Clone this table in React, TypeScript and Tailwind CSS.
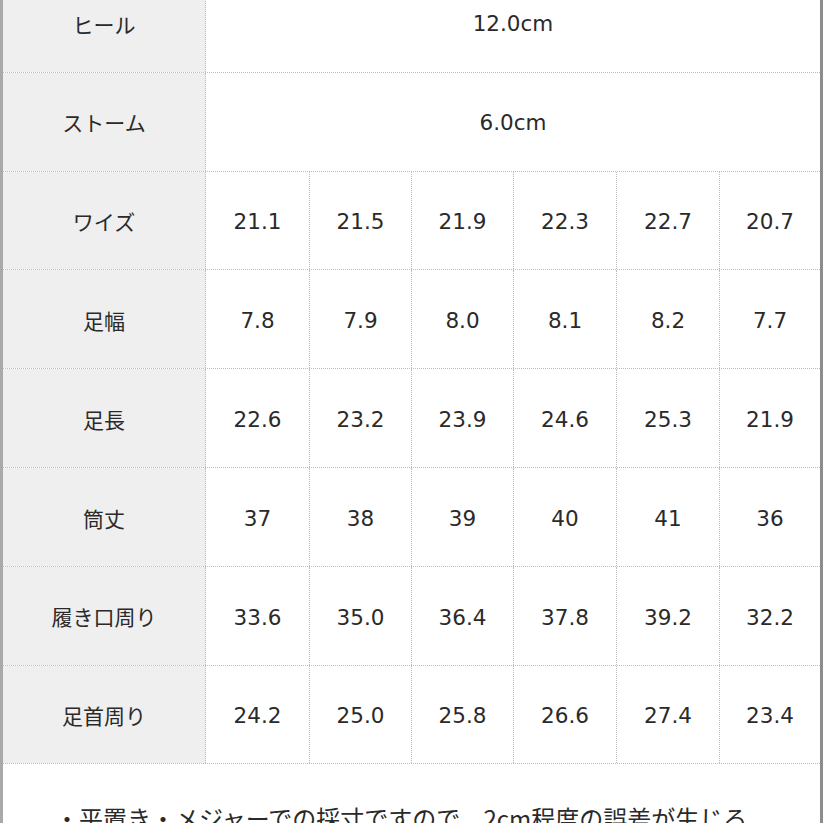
import React from "react";

const rows: { label: string; values: string[] }[] = [
  { label: "ワイズ", values: ["21.1", "21.5", "21.9", "22.3", "22.7", "20.7"] },
  { label: "足幅", values: ["7.8", "7.9", "8.0", "8.1", "8.2", "7.7"] },
  { label: "足長", values: ["22.6", "23.2", "23.9", "24.6", "25.3", "21.9"] },
  { label: "筒丈", values: ["37", "38", "39", "40", "41", "36"] },
  { label: "履き口周り", values: ["33.6", "35.0", "36.4", "37.8", "39.2", "32.2"] },
  { label: "足首周り", values: ["24.2", "25.0", "25.8", "26.6", "27.4", "23.4"] },
];

const labelCls =
  "w-[203px] shrink-0 pt-[3px] bg-[#efefef] border-r border-dotted border-[#bdbdbd] flex items-center justify-center text-[21px] text-[#2a2a2a] [font-family:'Noto_Sans_CJK_JP',sans-serif]";

export default function App() {
  return (
    <div className="w-[823px] h-[823px] overflow-hidden bg-white">
      <div className="-mt-[26px] w-[823px] border-l-[3px] border-l-[#a9a9a9] border-r-[3px] border-r-[#8c8c8c]">
        {[
          { label: "ヒール", value: "12.0cm" },
          { label: "ストーム", value: "6.0cm" },
        ].map((r) => (
          <div key={r.label} className="flex h-[98.8px] border-b border-dotted border-[#bdbdbd]">
            <div className={labelCls}>{r.label}</div>
            <div className="flex-1 pt-[3px] flex items-center justify-center text-[21.5px] text-[#2a2a2a] [font-family:'DejaVu_Sans',sans-serif]">
              {r.value}
            </div>
          </div>
        ))}
        {rows.map((r) => (
          <div key={r.label} className="flex h-[98.8px] border-b border-dotted border-[#bdbdbd]">
            <div className={labelCls}>{r.label}</div>
            <div className="flex-1 grid grid-cols-[104px_102px_102px_103px_103px_1fr]">
              {r.values.map((v, i) => (
                <div
                  key={i}
                  className={
                    "pt-[4px] flex items-center justify-center text-[21.5px] text-[#2a2a2a] [font-family:'DejaVu_Sans',sans-serif] " +
                    (i < 5 ? "border-r border-dotted border-[#bdbdbd]" : "")
                  }
                >
                  {v}
                </div>
              ))}
            </div>
          </div>
        ))}
        <div className="h-[120px] pt-[36px] pl-[52px] text-[24px] text-[#2a2a2a] whitespace-nowrap [font-family:'Noto_Sans_CJK_JP',sans-serif]">
          ・平置き・メジャーでの採寸ですので、2cm程度の誤差が生じる
        </div>
      </div>
    </div>
  );
}
